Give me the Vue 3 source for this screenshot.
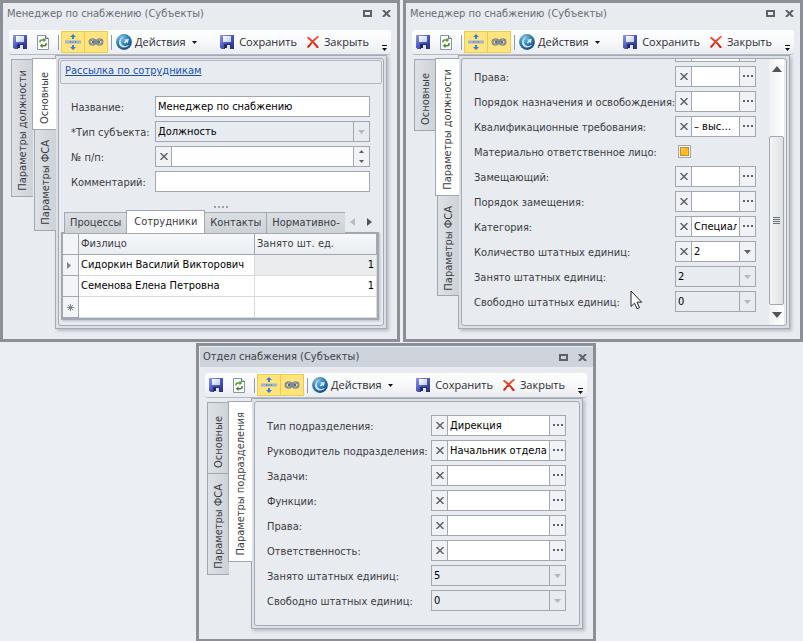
<script setup>
import { ref } from 'vue'

const windows = ref([
  {
    id: 'manager-main',
    title: 'Менеджер по снабжению (Субъекты)',
    kind: 'main',
    back: ['Параметры должности'],
    front: [{ text: 'Основные', active: true }, { text: 'Параметры ФСА' }],
    fields: [
      { label: 'Название:', type: 'text', value: 'Менеджер по снабжению' },
      { label: '*Тип субъекта:', type: 'locked', value: 'Должность' },
      { label: '№ п/п:', type: 'spin', value: '' },
      { label: 'Комментарий:', type: 'text', value: '' },
    ],
  },
  {
    id: 'manager-params',
    title: 'Менеджер по снабжению (Субъекты)',
    kind: 'scroll',
    back: ['Основные'],
    front: [{ text: 'Параметры должности', active: true }, { text: 'Параметры ФСА' }],
    fields: [
      { label: '', type: 'lookup', value: '' },
      { label: 'Права:', type: 'lookup', value: '' },
      { label: 'Порядок назначения и освобождения:', type: 'lookup', value: '' },
      { label: 'Квалификационные требования:', type: 'lookup', value: '– выс…' },
      { label: 'Материально ответственное лицо:', type: 'check' },
      { label: 'Замещающий:', type: 'lookup', value: '' },
      { label: 'Порядок замещения:', type: 'lookup', value: '' },
      { label: 'Категория:', type: 'lookup', value: 'Специал' },
      { label: 'Количество штатных единиц:', type: 'combo', value: '2' },
      { label: 'Занято штатных единиц:', type: 'locked', value: '2' },
      { label: 'Свободно штатных единиц:', type: 'locked', value: '0' },
    ],
  },
  {
    id: 'department',
    title: 'Отдел снабжения (Субъекты)',
    kind: 'plain',
    active: true,
    back: ['Основные', 'Параметры ФСА'],
    front: [{ text: 'Параметры подразделения', active: true }],
    fields: [
      { label: 'Тип подразделения:', type: 'lookup', value: 'Дирекция' },
      { label: 'Руководитель подразделения:', type: 'lookup', value: 'Начальник отдела' },
      { label: 'Задачи:', type: 'lookup', value: '' },
      { label: 'Функции:', type: 'lookup', value: '' },
      { label: 'Права:', type: 'lookup', value: '' },
      { label: 'Ответственность:', type: 'lookup', value: '' },
      { label: 'Занято штатных единиц:', type: 'locked', value: '5' },
      { label: 'Свободно штатных единиц:', type: 'locked', value: '0' },
    ],
  },
])

const gridTabs = ['Процессы', 'Сотрудники', 'Контакты', 'Нормативно-']
const people = [
  { name: 'Сидоркин Василий Викторович', count: 1 },
  { name: 'Семенова Елена Петровна', count: 1 },
]
</script>

<template>
  <svg class="defs" aria-hidden="true">
    <defs>
      <linearGradient id="gBlue" x1="0" y1="0" x2="1" y2="1">
        <stop offset="0" stop-color="#8f9bea" />
        <stop offset=".5" stop-color="#4c58c0" />
        <stop offset="1" stop-color="#262c7c" />
      </linearGradient>
      <linearGradient id="gLabel" x1="0" y1="0" x2="1" y2="1">
        <stop offset="0" stop-color="#ffffff" />
        <stop offset="1" stop-color="#b9cdf0" />
      </linearGradient>
      <radialGradient id="gGlobe" cx=".35" cy=".25" r=".85">
        <stop offset="0" stop-color="#7fbfe0" />
        <stop offset=".5" stop-color="#2f7fb8" />
        <stop offset="1" stop-color="#0f3f70" />
      </radialGradient>
      <linearGradient id="gRed" x1="0" y1="0" x2="0" y2="1">
        <stop offset="0" stop-color="#f0603c" />
        <stop offset="1" stop-color="#d01808" />
      </linearGradient>
    </defs>
    <symbol id="iSave" viewBox="0 0 14 14">
      <path d="M0 0h14v14H1.500L0 12.500z" fill="url(#gBlue)" />
      <path d="M3 1h8v6H3z" fill="url(#gLabel)" />
      <path d="M4 9h7v5H4z" fill="#2a2f62" />
      <path d="M5 10h5v4H5z" fill="#dfe3ee" />
      <path d="M5 10h2v3H5z" fill="#22265a" />
    </symbol>
    <symbol id="iRefresh" viewBox="0 0 12 15">
      <path d="M.5.5h8l3 3v11H.5z" fill="#fbfcfe" stroke="#8796a8" />
      <path d="M8.500.5v3h3" fill="#dde4ec" stroke="#5f7084" />
      <path d="M3 7.500V6.500Q3 5 5 5h2" fill="none" stroke="#5d9428" stroke-width="1.500" />
      <path d="M6.500 2.800L9.200 5 6.500 7.200z" fill="#5d9428" />
      <path d="M9 8v1.200q0 1.500-2 1.500H5" fill="none" stroke="#4a8220" stroke-width="1.500" />
      <path d="M5.500 8.500L2.800 10.700l2.700 2.200z" fill="#4a8220" />
    </symbol>
    <symbol id="iSplit" viewBox="0 0 16 16">
      <path d="M0 6.500h16v3H0z" fill="#9db4d3" />
      <path d="M5 7.500h1v1H5zM7.500 7.500h1v1h-1zM10 7.500h1v1h-1z" fill="#40587c" />
      <path d="M8 0l3 3H9v2H7V3H5zM8 16l3-3H9v-2H7v2H5z" fill="#3c7be0" />
    </symbol>
    <symbol id="iChain" viewBox="0 0 16 8">
      <g fill="none">
        <rect x="1.500" y="1.500" width="6" height="5" rx="2.500" stroke="#56657c" stroke-width="1.800" />
        <rect x="8.500" y="1.500" width="6" height="5" rx="2.500" stroke="#56657c" stroke-width="1.800" />
        <rect x="1.500" y="1.500" width="6" height="5" rx="2.500" stroke="#c3cfdf" stroke-width=".6" />
        <rect x="8.500" y="1.500" width="6" height="5" rx="2.500" stroke="#c3cfdf" stroke-width=".6" />
      </g>
      <path d="M5 4h6" stroke="#33445f" stroke-width="2" stroke-linecap="round" />
      <path d="M5.500 4h5" stroke="#dce4ef" stroke-width=".9" />
    </symbol>
    <symbol id="iGlobe" viewBox="0 0 16 16">
      <circle cx="8" cy="8" r="7.900" fill="url(#gGlobe)" />
      <path d="M11.500 2.300C6.500 2 4 5.600 5.300 9.200c1 2.800 4.200 3.600 7.900 1.600-1.800 3-6.200 3.800-8.800 1.300C1 8.700 3.800 1.600 11.500 2.300z" fill="#c4e0f0" />
      <path d="M8 5.800l4.800-1-1 4.600-1.100-1.300-1.900 1.500-1-1.200 1.700-1.600z" fill="#d9ecf7" />
    </symbol>
    <symbol id="iRedX" viewBox="0 0 12 12">
      <path d="M1.200 1.800Q6 5 10.500 11.200M10.800.8Q6 4.500 1.200 10.800" fill="none" stroke="url(#gRed)" stroke-width="2" stroke-linecap="round" />
    </symbol>
    <symbol id="iX" viewBox="0 0 8 7">
      <path d="M.5 0L7.500 7M7.500 0L.5 7" stroke="#5a6067" stroke-width="1.400" />
    </symbol>
    <symbol id="iDots" viewBox="0 0 10 2">
      <path d="M0 0h2v2H0zM4 0h2v2H4zM8 0h2v2H8z" fill="#5c626a" />
    </symbol>
    <symbol id="iDown" viewBox="0 0 7 4">
      <path d="M0 0h7L3.500 4z" fill="currentColor" />
    </symbol>
    <symbol id="iUp" viewBox="0 0 7 4">
      <path d="M0 4h7L3.500 0z" fill="currentColor" />
    </symbol>
  </svg>

  <main class="desk">
    <section v-for="w in windows" :key="w.id" class="window" :class="[w.kind, { current: w.active }]">
      <header class="caption">
        <h2>{{ w.title }}</h2>
        <button class="cap-btn" aria-label="Развернуть">
          <svg width="9" height="7" viewBox="0 0 9 7"><path d="M1 1h7v5H1z" fill="none" stroke="#5d6269" stroke-width="2" /></svg>
        </button>
        <button class="cap-btn" aria-label="Закрыть окно">
          <svg width="9" height="7" viewBox="0 0 9 7"><path d="M1 0L8 7M8 0L1 7" stroke="#5d6269" stroke-width="2" /></svg>
        </button>
      </header>

      <div class="toolbar">
        <button class="tool" aria-label="Записать"><svg width="14" height="14"><use href="#iSave" /></svg></button>
        <button class="tool" aria-label="Обновить"><svg width="12" height="15"><use href="#iRefresh" /></svg></button>
        <span class="sep"></span>
        <span class="toggles">
          <button class="toggle" aria-label="Разделитель"><svg width="16" height="16"><use href="#iSplit" /></svg></button>
          <button class="toggle" aria-label="Связь"><svg width="16" height="8"><use href="#iChain" /></svg></button>
        </span>
        <span class="sep"></span>
        <button class="tool menu">
          <svg width="16" height="16"><use href="#iGlobe" /></svg>
          <span>Действия</span>
          <svg class="drop" width="5" height="3" viewBox="0 0 5 3"><path d="M0 0h5L2.500 3z" fill="#111" /></svg>
        </button>
        <button class="tool save"><svg width="14" height="14"><use href="#iSave" /></svg><span>Сохранить</span></button>
        <button class="tool shut"><svg width="12" height="12"><use href="#iRedX" /></svg><span>Закрыть</span></button>
        <button class="more" aria-label="Ещё">
          <svg width="5" height="6" viewBox="0 0 5 6"><path d="M0 0h5v1H0zM0 3h5L2.500 6z" fill="#111" /></svg>
        </button>
      </div>

      <div class="body">
        <nav class="tabs back">
          <button v-for="t in w.back" :key="t" class="vtab"><span>{{ t }}</span></button>
        </nav>
        <nav class="tabs front">
          <button v-for="t in w.front" :key="t.text" class="vtab" :class="{ on: t.active }"><span>{{ t.text }}</span></button>
        </nav>
        <div class="panel">
          <div class="inner">
            <div class="content">
              <p v-if="w.kind === 'main'" class="mailing"><a href="#">Рассылка по сотрудникам</a></p>
              <div class="form">
                <template v-for="(f, i) in w.fields" :key="i">
                  <label :for="w.id + i">{{ f.label }}</label>
                  <div v-if="f.type === 'check'" class="tick"><input :id="w.id + i" type="checkbox" /></div>
                  <div v-else class="field" :class="f.type">
                    <button v-if="['lookup', 'combo', 'spin'].includes(f.type)" class="clear" aria-label="Очистить">
                      <svg width="8" height="7"><use href="#iX" /></svg>
                    </button>
                    <select v-if="f.type === 'locked' || f.type === 'combo'" :id="w.id + i" :disabled="f.type === 'locked'">
                      <option>{{ f.value }}</option>
                    </select>
                    <input v-else :id="w.id + i" v-model="f.value" type="text" />
                    <button v-if="f.type === 'lookup'" class="pick" aria-label="Выбрать">
                      <svg width="10" height="2"><use href="#iDots" /></svg>
                    </button>
                    <span v-if="f.type === 'locked' || f.type === 'combo'" class="pick"><svg width="7" height="4"><use href="#iDown" /></svg></span>
                    <span v-if="f.type === 'spin'" class="spinner">
                      <button aria-label="Больше"><svg width="5" height="3"><use href="#iUp" /></svg></button>
                      <button aria-label="Меньше"><svg width="5" height="3"><use href="#iDown" /></svg></button>
                    </span>
                  </div>
                </template>
              </div>

              <template v-if="w.kind === 'main'">
                <div class="splitter"><i></i><i></i><i></i><i></i></div>
                <div class="gridbox">
                  <div class="htabs">
                    <div class="strip">
                      <button v-for="t in gridTabs" :key="t" class="htab" :class="{ on: t === 'Сотрудники' }">{{ t }}</button>
                    </div>
                    <button class="arrow" aria-label="Назад"><svg width="5" height="8" viewBox="0 0 5 8"><path d="M5 0v8L0 4z" fill="#b9bec5" /></svg></button>
                    <button class="arrow" aria-label="Вперёд"><svg width="5" height="8" viewBox="0 0 5 8"><path d="M0 0v8l5-4z" fill="#4f555d" /></svg></button>
                  </div>
                  <table>
                    <thead>
                      <tr><th class="mark"></th><th class="who">Физлицо</th><th>Занято шт. ед.</th></tr>
                    </thead>
                    <tbody>
                      <tr v-for="(p, i) in people" :key="p.name">
                        <td class="mark"><svg v-if="i === 0" width="4" height="7" viewBox="0 0 4 7"><path d="M0 0v7l4-3.500z" fill="#7c838c" /></svg></td>
                        <td>{{ p.name }}</td>
                        <td class="num" :class="{ focus: i === 0 }">{{ p.count }}</td>
                      </tr>
                      <tr>
                        <td class="mark"><svg width="7" height="7" viewBox="0 0 7 7"><path d="M3.500 0v7M0 3.500h7M1 1l5 5M6 1L1 6" stroke="#7c838c" /></svg></td>
                        <td></td><td></td>
                      </tr>
                    </tbody>
                  </table>
                </div>
              </template>
            </div>
            <div v-if="w.kind === 'scroll'" class="scrollbar">
              <svg width="10" height="6" viewBox="0 0 10 6"><path d="M0 6h10L5 0z" fill="#51565c" /></svg>
              <div class="track"><div class="thumb"><i></i><i></i><i></i><i></i></div></div>
              <svg width="10" height="6" viewBox="0 0 10 6"><path d="M0 0h10L5 6z" fill="#51565c" /></svg>
            </div>
          </div>
        </div>
      </div>
    </section>

    <svg class="pointer" width="13" height="20" viewBox="0 0 13 20">
      <path d="M1 1v15.500l3.500-3.300 2.600 5.600 2.400-1.200L7 12.200h4.700z" fill="#fff" stroke="#1d1f2c" />
    </svg>
  </main>
</template>

<style>
body {
  margin: 0;
  background: #ebeef3;
}
</style>

<style scoped>
* {
  box-sizing: border-box;
}
button,
input,
select {
  margin: 0;
  padding: 0;
  border: 0;
  border-radius: 0;
  background: none;
  font: inherit;
  color: inherit;
  outline: 0;
}
svg {
  display: block;
  flex: none;
}
.defs {
  position: absolute;
  width: 0;
  height: 0;
}
.desk {
  position: relative;
  display: grid;
  grid-template-columns: 1fr 1fr;
  gap: 1px 3px;
  font-family: "DejaVu Sans Condensed", "DejaVu Sans", sans-serif;
  font-size: 11px;
  line-height: 14px;
  color: #3b3b3f;
}
.window {
  display: flex;
  flex-direction: column;
  min-width: 0;
  border: 3px solid #8c9096;
  background: #e8ebf0;
}
.window.plain {
  grid-column: 1 / 3;
  width: 400px;
  margin-left: 196px;
}
.caption {
  display: flex;
  align-items: center;
  gap: 10px;
  height: 21px;
  margin-bottom: 6px;
  padding: 0 6px 0 4px;
  color: #6a6b76;
}
.current .caption {
  background: #cdd4dc;
  border-top: 1px solid #e8ebf0;
  border-left: 1px solid #e8ebf0;
  padding-left: 3px;
  color: #3f4148;
}
.caption h2 {
  flex: 1;
  margin: 0;
  font-size: 11px;
  font-weight: 400;
}
.toolbar {
  display: flex;
  align-items: center;
  height: 25px;
  margin: 0 6px;
  padding-left: 4px;
  border-radius: 3px;
  border-bottom: 1px solid #b4bac2;
  background: linear-gradient(#ffffff, #f7f8fa 50%, #e9ecf0);
  font-family: "Open Sans", "Noto Sans", sans-serif;
  color: #2b2c32;
}
.tool {
  display: flex;
  align-items: center;
  gap: 5px;
  white-space: nowrap;
}
.tool + .tool {
  margin-left: 10px;
}
.sep {
  width: 1px;
  height: 15px;
  margin: 0 2px 0 9px;
  background: #8f9cb0;
}
.toggles {
  display: flex;
}
.toggle {
  display: flex;
  align-items: center;
  justify-content: center;
  width: 24px;
  height: 22px;
  border: 1px solid #efcb4c;
  background: #ffe37c;
}
.toggle + .toggle {
  width: 23px;
  border-left: 0;
}
.toggles + .sep {
  margin: 0 4px 0 3px;
}
.menu {
  gap: 3px;
}
.drop {
  margin-left: 3px;
}
.tool.save {
  margin-left: auto;
}
.tool.shut {
  margin-right: 10px;
}
.more {
  display: flex;
  align-items: flex-end;
  align-self: stretch;
  width: 12px;
  padding: 0 0 3px 3px;
}
.body {
  display: flex;
  flex: 1;
  align-items: flex-start;
  margin: 0 10px 10px 8px;
}
.tabs {
  position: relative;
  display: flex;
  flex-direction: column;
  align-items: flex-end;
  padding-top: 4px;
}
.tabs.front {
  z-index: 1;
  margin: -1px -1px 0;
}
.vtab {
  display: flex;
  flex-direction: column;
  justify-content: flex-end;
  align-items: center;
  width: 22px;
  min-height: 72px;
  padding: 10px 0 5px;
  border: 1px solid #a1a8b2;
  border-right-width: 0;
  background: linear-gradient(90deg, #dde2e6, #cdd2d7);
}
.vtab + .vtab {
  margin-top: -1px;
}
.vtab.on {
  width: 24px;
  background: #fff;
}
.vtab span {
  writing-mode: vertical-rl;
  transform: rotate(180deg);
  white-space: nowrap;
}
.panel {
  display: flex;
  flex: 1;
  align-self: stretch;
  min-width: 0;
  padding: 2px;
  border: 1px solid #a3aab4;
  background: #dde1e7;
  box-shadow: 2px 2px 3px #b9bec6;
}
.inner {
  display: flex;
  flex: 1;
  min-width: 0;
  border: 1px solid #a3aab4;
  border-radius: 3px;
  background: #e8ebf0;
  overflow: hidden;
}
.content {
  flex: 1;
  min-width: 0;
}
.form {
  display: grid;
  grid-template-columns: 84px 1fr;
  grid-auto-rows: 21px;
  gap: 4px 0;
  padding: 11px 13px 0 12px;
}
.scroll .form {
  grid-template-columns: minmax(0, 1fr) 81px;
  margin-top: -18px;
  padding: 0 13px 13px 12px;
}
.plain .form {
  grid-template-columns: minmax(0, 1fr) 135px;
  padding: 13px 13px 14px 12px;
}
.form label {
  align-self: center;
  padding-top: 2px;
  white-space: nowrap;
}
.field {
  position: relative;
  display: flex;
  min-width: 0;
  border: 1px solid #a1a8b2;
  background: #fff;
  color: #000;
}
.field input,
.field select {
  flex: 1;
  width: 0;
  min-width: 0;
  padding: 0 2px;
  appearance: none;
  color: #000;
  opacity: 1;
}
.field.locked {
  background: #e8ebf0;
}
.clear,
.pick {
  display: flex;
  align-items: center;
  justify-content: center;
  width: 16px;
  background: #f0f2f5;
  color: #5c626a;
}
.clear {
  border-right: 1px solid #a1a8b2;
}
.pick {
  border-left: 1px solid #a1a8b2;
}
button.pick {
  padding-bottom: 1px;
}
.locked .pick {
  background: none;
  color: #b3b8bf;
}
.spinner {
  display: flex;
  flex-direction: column;
  width: 16px;
  border-left: 1px solid #a1a8b2;
  background: #f0f2f5;
  color: #5c626a;
}
.spinner button {
  display: flex;
  flex: 1;
  align-items: center;
  justify-content: center;
}
.tick {
  display: flex;
  align-items: center;
  padding-left: 3px;
}
.tick input {
  appearance: none;
  width: 13px;
  height: 13px;
  border: 1px solid #a1a8b2;
  background: linear-gradient(135deg, #ffd980, #fcb51c 50%, #ffd43a);
  box-shadow: inset 0 0 0 1px #fff, inset 0 0 0 2px #cf8a1c;
}
.mailing {
  margin: 1px;
  padding: 3px 4px 5px;
  border: 1px solid #b0b6bf;
  border-radius: 2px;
}
.mailing a {
  color: #1a4fb0;
}
.splitter {
  display: flex;
  justify-content: center;
  gap: 2px;
  padding: 14px 0 2px;
}
.splitter i {
  width: 2px;
  height: 2px;
  background: #98a0ab;
}
.gridbox {
  margin: 0 4px 5px 2px;
}
.htabs {
  display: flex;
  align-items: center;
  padding-left: 3px;
}
.strip {
  display: flex;
  flex: 1;
  align-items: flex-end;
  min-width: 0;
  overflow: hidden;
}
.htab {
  flex: none;
  height: 21px;
  padding: 0 5px;
  border: 1px solid #a1a8b2;
  border-bottom: 0;
  background: linear-gradient(#dadfe3, #cdd2d7);
}
.htab + .htab {
  margin-left: -1px;
}
.htab.on {
  height: 23px;
  padding: 0 7px;
  background: #fff;
}
.arrow {
  width: 17px;
  padding-left: 5px;
}
table {
  width: 100%;
  margin-top: -1px;
  border: 2px solid #a1a8b2;
  border-collapse: separate;
  border-spacing: 0;
  table-layout: fixed;
  background: #fff;
  color: #000;
  box-shadow: 1px 1px 2px #b9bec6;
}
th,
td {
  height: 21px;
  padding: 0 2px;
  border-right: 1px solid #d8dadd;
  border-bottom: 1px solid #d8dadd;
  text-align: left;
  font-weight: 400;
  white-space: nowrap;
}
th {
  border-color: #a1a8b2;
  background: linear-gradient(#f6f8fa, #e9edf2);
  color: #3b3b3f;
}
.mark {
  width: 16px;
  padding: 0 5px;
  border-color: #a1a8b2;
  background: #f2f4f7;
}
td.mark {
  padding: 0 4px;
}
.who {
  width: 176px;
}
.num {
  text-align: right;
}
.focus {
  background: #ebecee;
}
.scrollbar {
  display: flex;
  flex-direction: column;
  align-items: center;
  gap: 7px;
  width: 15px;
  margin-right: 2px;
  padding: 7px 0;
  background: linear-gradient(90deg, #eef0f3, #fff);
}
.track {
  display: flex;
  flex: 1;
  flex-direction: column;
  justify-content: flex-end;
  align-self: stretch;
}
.thumb {
  display: flex;
  flex-direction: column;
  align-items: center;
  justify-content: center;
  gap: 1px;
  height: 75%;
  border: 1px solid #a1a8b2;
  border-radius: 2px;
  background: linear-gradient(90deg, #f3f4f6, #dfe1e4);
}
.thumb i {
  width: 7px;
  height: 1px;
  background: #6b7178;
}
.pointer {
  position: absolute;
  left: 630px;
  top: 290px;
}
</style>
